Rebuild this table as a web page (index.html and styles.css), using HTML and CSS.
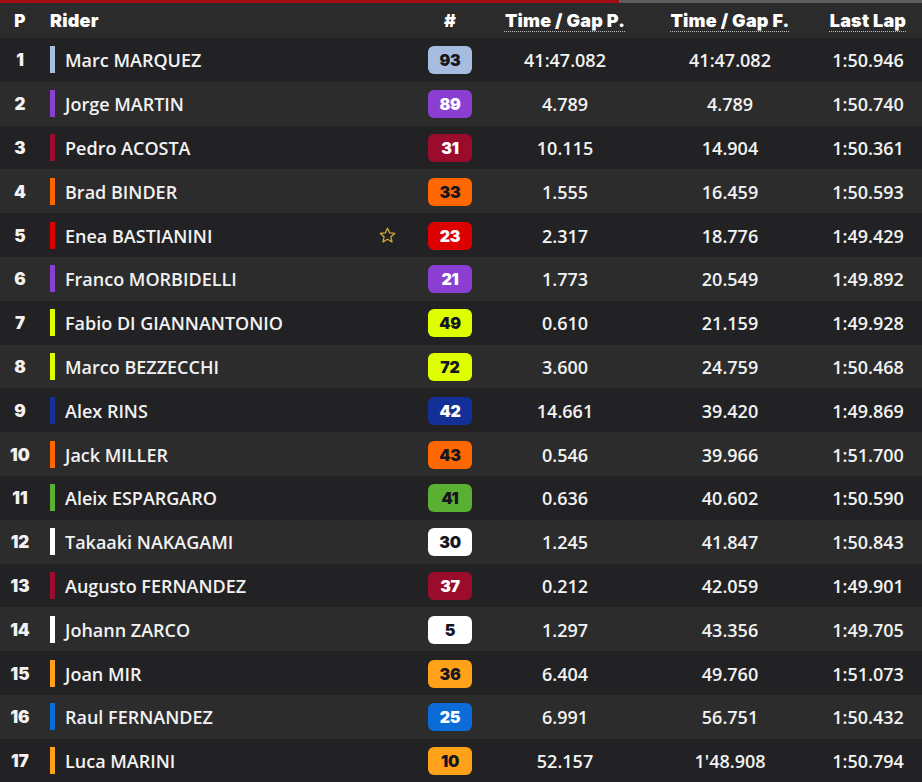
FILE: index.html
```html
<!DOCTYPE html>
<html lang="en">
<head>
<meta charset="utf-8">
<title>Race Results</title>
<link rel="stylesheet" href="styles.css">
</head>
<body>
<div class="topbar"><div class="progress"></div></div>
<div class="table">
  <div class="row head">
    <div class="c-pos">P</div>
    <div class="c-rider"><span class="htext">Rider</span></div>
    <div class="c-num">#</div>
    <div class="c-t"><abbr>Time / Gap P.</abbr></div>
    <div class="c-t"><abbr>Time / Gap F.</abbr></div>
    <div class="c-t"><abbr>Last Lap</abbr></div>
  </div>

  <div class="row odd"><div class="c-pos">1</div><div class="c-rider"><span class="bar c93"></span><span class="name">Marc MARQUEZ</span></div><div class="c-num"><span class="badge c93 dark">93</span></div><div class="c-t">41:47.082</div><div class="c-t">41:47.082</div><div class="c-t">1:50.946</div></div>
  <div class="row even"><div class="c-pos">2</div><div class="c-rider"><span class="bar c89"></span><span class="name">Jorge MARTIN</span></div><div class="c-num"><span class="badge c89">89</span></div><div class="c-t">4.789</div><div class="c-t">4.789</div><div class="c-t">1:50.740</div></div>
  <div class="row odd"><div class="c-pos">3</div><div class="c-rider"><span class="bar c31"></span><span class="name">Pedro ACOSTA</span></div><div class="c-num"><span class="badge c31">31</span></div><div class="c-t">10.115</div><div class="c-t">14.904</div><div class="c-t">1:50.361</div></div>
  <div class="row even"><div class="c-pos">4</div><div class="c-rider"><span class="bar c33"></span><span class="name">Brad BINDER</span></div><div class="c-num"><span class="badge c33 dark">33</span></div><div class="c-t">1.555</div><div class="c-t">16.459</div><div class="c-t">1:50.593</div></div>
  <div class="row odd"><div class="c-pos">5</div><div class="c-rider"><span class="bar c23"></span><span class="name">Enea BASTIANINI</span><svg class="star" viewBox="0 0 24 24" width="19" height="19"><path d="M12 2.8l2.7 5.9 6.4.7-4.8 4.3 1.4 6.3L12 16.8 6.3 20l1.4-6.3-4.8-4.3 6.4-.7z" fill="none" stroke="#d4a93a" stroke-width="1.6" stroke-linejoin="round"/></svg></div><div class="c-num"><span class="badge c23">23</span></div><div class="c-t">2.317</div><div class="c-t">18.776</div><div class="c-t">1:49.429</div></div>
  <div class="row even"><div class="c-pos">6</div><div class="c-rider"><span class="bar c21"></span><span class="name">Franco MORBIDELLI</span></div><div class="c-num"><span class="badge c21">21</span></div><div class="c-t">1.773</div><div class="c-t">20.549</div><div class="c-t">1:49.892</div></div>
  <div class="row odd"><div class="c-pos">7</div><div class="c-rider"><span class="bar c49"></span><span class="name">Fabio DI GIANNANTONIO</span></div><div class="c-num"><span class="badge c49 dark">49</span></div><div class="c-t">0.610</div><div class="c-t">21.159</div><div class="c-t">1:49.928</div></div>
  <div class="row even"><div class="c-pos">8</div><div class="c-rider"><span class="bar c49"></span><span class="name">Marco BEZZECCHI</span></div><div class="c-num"><span class="badge c49 dark">72</span></div><div class="c-t">3.600</div><div class="c-t">24.759</div><div class="c-t">1:50.468</div></div>
  <div class="row odd"><div class="c-pos">9</div><div class="c-rider"><span class="bar c42"></span><span class="name">Alex RINS</span></div><div class="c-num"><span class="badge c42">42</span></div><div class="c-t">14.661</div><div class="c-t">39.420</div><div class="c-t">1:49.869</div></div>
  <div class="row even"><div class="c-pos">10</div><div class="c-rider"><span class="bar c33"></span><span class="name">Jack MILLER</span></div><div class="c-num"><span class="badge c33 dark">43</span></div><div class="c-t">0.546</div><div class="c-t">39.966</div><div class="c-t">1:51.700</div></div>
  <div class="row odd"><div class="c-pos">11</div><div class="c-rider"><span class="bar c41"></span><span class="name">Aleix ESPARGARO</span></div><div class="c-num"><span class="badge c41 dark">41</span></div><div class="c-t">0.636</div><div class="c-t">40.602</div><div class="c-t">1:50.590</div></div>
  <div class="row even"><div class="c-pos">12</div><div class="c-rider"><span class="bar cwhite"></span><span class="name">Takaaki NAKAGAMI</span></div><div class="c-num"><span class="badge cwhite dark">30</span></div><div class="c-t">1.245</div><div class="c-t">41.847</div><div class="c-t">1:50.843</div></div>
  <div class="row odd"><div class="c-pos">13</div><div class="c-rider"><span class="bar c31"></span><span class="name">Augusto FERNANDEZ</span></div><div class="c-num"><span class="badge c31">37</span></div><div class="c-t">0.212</div><div class="c-t">42.059</div><div class="c-t">1:49.901</div></div>
  <div class="row even"><div class="c-pos">14</div><div class="c-rider"><span class="bar cwhite"></span><span class="name">Johann ZARCO</span></div><div class="c-num"><span class="badge cwhite dark">5</span></div><div class="c-t">1.297</div><div class="c-t">43.356</div><div class="c-t">1:49.705</div></div>
  <div class="row odd"><div class="c-pos">15</div><div class="c-rider"><span class="bar c36"></span><span class="name">Joan MIR</span></div><div class="c-num"><span class="badge c36 dark">36</span></div><div class="c-t">6.404</div><div class="c-t">49.760</div><div class="c-t">1:51.073</div></div>
  <div class="row even"><div class="c-pos">16</div><div class="c-rider"><span class="bar c25"></span><span class="name">Raul FERNANDEZ</span></div><div class="c-num"><span class="badge c25">25</span></div><div class="c-t">6.991</div><div class="c-t">56.751</div><div class="c-t">1:50.432</div></div>
  <div class="row odd"><div class="c-pos">17</div><div class="c-rider"><span class="bar c36"></span><span class="name">Luca MARINI</span></div><div class="c-num"><span class="badge c36 dark">10</span></div><div class="c-t">52.157</div><div class="c-t">1'48.908</div><div class="c-t">1:50.794</div></div>
</div>
</body>
</html>
```

FILE: styles.css
```css
html, body {
  margin: 0;
  padding: 0;
  background: #222224;
}
body {
  width: 922px;
  height: 782px;
  overflow: hidden;
  font-family: "Open Sans", "Liberation Sans", sans-serif;
  color: #f2f2f2;
}
.topbar {
  height: 3px;
  background: #5e5e5e;
}
.progress {
  width: 619px;
  height: 3px;
  background: #a30d12;
}
.table {
  display: flex;
  flex-direction: column;
}
.row {
  display: grid;
  grid-template-columns: 40px 365px 90px 140px 190px 86px;
  align-items: center;
  height: 43.8px;
  font-size: 18px;
  font-weight: 600;
}
.row.head {
  height: 35px;
  background: #2b2b2b;
  font-family: "Inter", "Liberation Sans", sans-serif;
  font-weight: 900;
  font-size: 18px;
  letter-spacing: 0.2px;
  color: #ffffff;
}
.row.odd { background: #222224; }
.row.even { background: #2c2c2c; }
.c-pos {
  text-align: center;
  font-family: "Inter", "Liberation Sans", sans-serif;
  font-weight: 900;
  font-size: 17px;
  padding-top: 1px;
}
.c-rider {
  display: flex;
  align-items: center;
  padding-left: 10px;
  padding-right: 8px;
}
.bar {
  width: 5px;
  height: 27px;
  margin-right: 10px;
  flex: none;
}
.name {
  flex: 1;
  letter-spacing: 0;
  padding-top: 1px;
}
.star { flex: none; }
.c-num {
  display: flex;
  justify-content: center;
  padding-top: 1px;
}
.c-t {
  text-align: center;
  padding-top: 1px;
}
.head .c-t, .head .c-num, .head .c-pos { padding-top: 0; }
.head abbr {
  text-decoration: underline dotted #bdbdbd;
  text-decoration-thickness: 1px;
  text-underline-offset: 4px;
}
.badge {
  display: flex;
  align-items: center;
  justify-content: center;
  width: 44px;
  height: 28px;
  border-radius: 6px;
  font-family: "Inter", "Liberation Sans", sans-serif;
  font-weight: 900;
  font-size: 16px;
  color: #ffffff;
  letter-spacing: -0.3px;
}
.badge.dark { color: #161620; }
.c93 { background: #a7bde0; }
.c89 { background: #8a3fd2; }
.c31 { background: #9a0b2c; }
.c33 { background: #ff6800; }
.c23 { background: #dd0000; }
.c21 { background: #8a3fd2; }
.c49 { background: #ddff00; }
.c42 { background: #132f98; }
.c41 { background: #5ab033; }
.cwhite { background: #ffffff; }
.c36 { background: #ffa21a; }
.c25 { background: #0b6cd8; }
```
